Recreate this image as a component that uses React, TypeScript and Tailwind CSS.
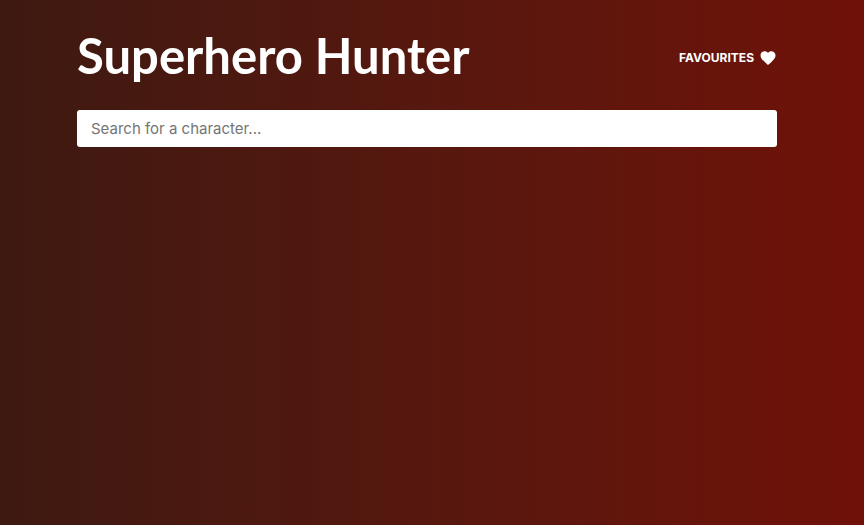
import { useState } from "react";

export default function App() {
  const [query, setQuery] = useState("");
  return (
    <div className="min-h-screen bg-linear-to-r from-[#3e1911] to-[#701108] font-['Inter',sans-serif]">
      <div className="pl-[77px] pr-[87px] pt-7">
        <header className="flex items-center justify-between">
          <h1 className="pb-1.5 font-['Lato',sans-serif] text-[49px] leading-[54px] font-bold text-white">
            Superhero Hunter
          </h1>
          <a href="#favourites" className="flex items-center gap-[5px] text-xs font-bold text-white">
            FAVOURITES
            <svg viewBox="0 0 24 24" className="size-[18px]" fill="currentColor" aria-hidden="true">
              <path d="M12 21.35l-1.45-1.32C5.4 15.36 2 12.28 2 8.5 2 5.42 4.42 3 7.5 3c1.74 0 3.41.81 4.5 2.09C13.09 3.81 14.76 3 16.5 3 19.58 3 22 5.42 22 8.5c0 3.78-3.4 6.86-8.55 11.54L12 21.35z" />
            </svg>
          </a>
        </header>
        <input
          type="search"
          aria-label="Search for a character"
          placeholder="Search for a character..."
          value={query}
          onChange={(e) => setQuery(e.target.value)}
          className="mt-[22px] block h-[37px] w-full rounded-[3px] bg-white px-3.5 text-[15px] text-black outline-none placeholder:text-[#757575]"
        />
      </div>
    </div>
  );
}
